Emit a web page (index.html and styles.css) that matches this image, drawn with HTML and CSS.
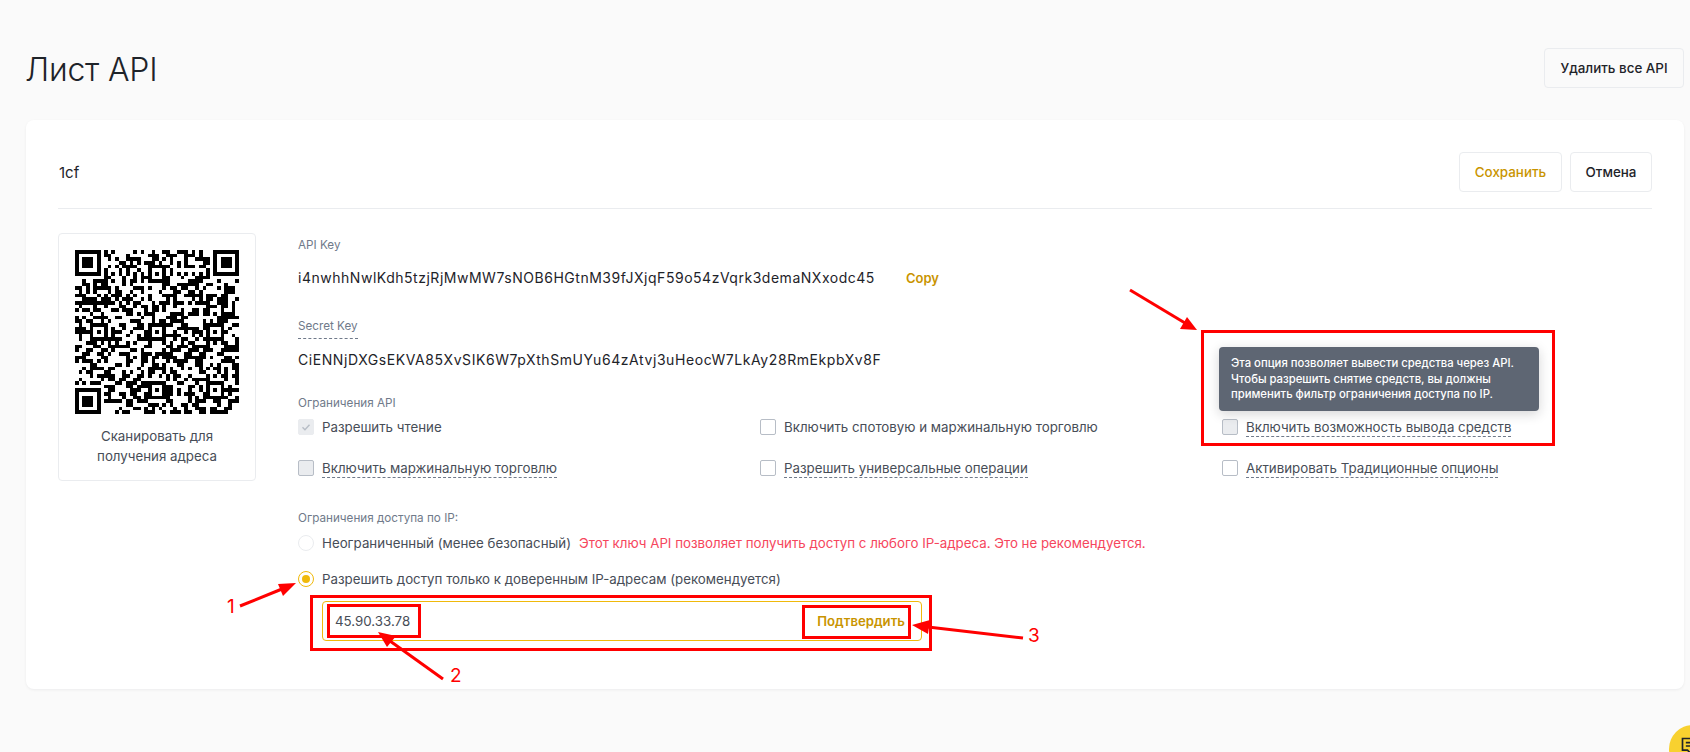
FILE: index.html
```html
<!DOCTYPE html>
<html lang="ru">
<head>
<meta charset="utf-8">
<title>Лист API</title>
<link rel="stylesheet" href="styles.css">
</head>
<body>
<div class="page">
  <header class="top">
    <h1 class="title">Лист API</h1>
    <button class="btn btn-top">Удалить все API</button>
  </header>
  <section class="card">
    <div class="card-head">
      <div class="name">1cf</div>
      <div class="actions">
        <button class="btn btn-save">Сохранить</button>
        <button class="btn btn-cancel">Отмена</button>
      </div>
    </div>
    <div class="card-body">
      <aside class="qr-box">
        <svg class="qr" viewBox="0 0 45 45" shape-rendering="crispEdges"><path id="qr-path" fill="#000" d=""/></svg>
        <p class="qr-text">Сканировать для получения адреса</p>
      </aside>
      <div class="main">
        <div class="label label-first">API Key</div>
        <div class="key-row">
          <span class="key key-api">i4nwhhNwlKdh5tzjRjMwMW7sNOB6HGtnM39fJXjqF59o54zVqrk3demaNXxodc45</span>
          <span class="copy">Copy</span>
        </div>
        <div class="label label-secret"><span class="dashed-label">Secret Key</span></div>
        <div class="key-row key-row-secret">
          <span class="key key-secret">CiENNjDXGsEKVA85XvSIK6W7pXthSmUYu64zAtvj3uHeocW7LkAy28RmEkpbXv8F</span>
        </div>
        <div class="label label-perm">Ограничения API</div>
        <div class="perm-grid">
          <div class="perm"><span class="check check-on"><svg viewBox="0 0 16 16" class="tick"><path d="M4 8.2l2.8 2.8L12 5.4" fill="none" stroke="#b7bdc6" stroke-width="1.6"/></svg></span><span class="perm-text">Разрешить чтение</span></div>
          <div class="perm"><span class="check"></span><span class="perm-text">Включить спотовую и маржинальную торговлю</span></div>
          <div class="perm perm-tip">
            <div class="tooltip">Эта опция позволяет вывести средства через API.<br>Чтобы разрешить снятие средств, вы должны<br>применить фильтр ограничения доступа по IP.</div>
            <span class="check check-off"></span><span class="perm-text dashed">Включить возможность вывода средств</span>
          </div>
          <div class="perm"><span class="check check-off"></span><span class="perm-text dashed">Включить маржинальную торговлю</span></div>
          <div class="perm"><span class="check"></span><span class="perm-text dashed">Разрешить универсальные операции</span></div>
          <div class="perm"><span class="check"></span><span class="perm-text dashed">Активировать Традиционные опционы</span></div>
        </div>
        <div class="label label-ip">Ограничения доступа по IP:</div>
        <div class="radio-row radio-row-first"><span class="radio"></span><span class="radio-text">Неограниченный (менее безопасный)</span><span class="warn">Этот ключ API позволяет получить доступ с любого IP-адреса. Это не рекомендуется.</span></div>
        <div class="radio-row radio-row-second"><span class="radio radio-on"></span><span class="radio-text">Разрешить доступ только к доверенным IP-адресам (рекомендуется)</span></div>
        <div class="ip-input"><span class="ip-value">45.90.33.78</span><span class="ip-confirm">Подтвердить</span></div>
      </div>
    </div>
  </section>
</div>

<svg class="marks" viewBox="0 0 1690 752" width="1690" height="752">
  <g fill="none" stroke="#f00" stroke-width="3">
    <rect x="1202.5" y="331.5" width="351" height="113"/>
    <rect x="311.5" y="596.5" width="619" height="53"/>
    <rect x="328.5" y="605.5" width="91" height="31"/>
    <rect x="803.5" y="606.5" width="106" height="31"/>
  </g>
  <g stroke="#f00" stroke-width="3">
    <line x1="1130" y1="290" x2="1185" y2="323"/>
    <line x1="240" y1="606" x2="282" y2="589"/>
    <line x1="443" y1="679" x2="390" y2="641"/>
    <line x1="1023" y1="638" x2="928" y2="627"/>
  </g>
  <g fill="#f00">
    <polygon points="1197,330 1180,329 1187,317"/>
    <polygon points="296,583 283,596 278,584"/>
    <polygon points="378,632 396,636 387,647"/>
    <polygon points="912,625 930,620 928,634"/>
  </g>
</svg>
<span class="num num-1">1</span>
<span class="num num-2">2</span>
<span class="num num-3">3</span>

<div class="chat"><svg class="chat-icon" viewBox="0 0 24 24"><path d="M3 3h18v14h-6l-3 3-3-3H3z M7 8h10M7 12h7" fill="none" stroke="#1e2329" stroke-width="2"/></svg></div>
<script src="qr.js"></script>
</body>
</html>
```
FILE: styles.css
```css
* { box-sizing: border-box; }
html, body { margin: 0; height: 752px; overflow: hidden; }
body {
  position: relative;
  background: #fafafa;
  color: #1e2329;
  font-family: "Inter", "Noto Sans", sans-serif;
  font-size: 13.3px;
}
.page { padding: 48px 6px 0 26px; }
.top { display: flex; justify-content: space-between; align-items: center; height: 40px; margin-bottom: 32px; }
.title { margin: 0 0 0 -1px; padding-top: 3px; font-size: 32px; line-height: 40px; font-weight: 300; letter-spacing: -0.2px; }
.btn {
  height: 40px;
  padding: 0;
  border: 1px solid #eaecef;
  border-radius: 4px;
  background: transparent;
  font: 500 13.4px/20px "Inter", "Noto Sans", sans-serif;
  color: #1e2329;
}
.btn-top { width: 140px; }
.btn-save { width: 103px; color: #c99400; }
.btn-cancel { width: 82px; }
.card {
  height: 569px;
  padding: 32px 32px 0;
  background: #fff;
  border-radius: 8px;
  box-shadow: 0 1px 3px rgba(20, 21, 26, 0.06);
}
.card-head { display: flex; justify-content: space-between; align-items: center; height: 57px; padding-bottom: 16px; border-bottom: 1px solid #eaecef; }
.name { margin-left: 1px; font-size: 15px; }
.actions { display: flex; gap: 8px; }
.card-body { display: flex; margin-top: 24px; }
.qr-box { width: 198px; height: 248px; margin-right: 42px; padding: 16px; border: 1px solid #eaecef; border-radius: 4px; flex: none; }
.qr { display: block; width: 164px; height: 164px; }
.qr-text { margin: 12px 0 0; text-align: center; line-height: 20px; color: #474d57; }
.main { flex: 1; min-width: 0; }
.label { font-size: 11.7px; line-height: 16px; color: #707a8a; }
.label-first { margin-top: 4px; }
.key-row { display: flex; align-items: center; height: 20px; margin-top: 15px; }
.key { font-size: 14px; line-height: 20px; }
.key-api { letter-spacing: 0.52px; }
.key-secret { letter-spacing: 0.57px; }
.copy { margin-left: 31px; font-size: 13px; font-weight: 600; color: #c99400; }
.label-secret { height: 16px; margin-top: 30px; }
.dashed-label { display: inline-block; height: 21px; border-bottom: 1px dashed #707a8a; }
.key-row-secret { margin-top: 16px; }
.label-perm { margin-top: 25px; }
.perm-grid { display: grid; grid-template-columns: repeat(3, 462px); row-gap: 21px; margin-top: 6px; }
.perm { display: flex; align-items: center; gap: 8px; height: 20px; color: #474d57; }
.perm-tip { position: relative; }
.check { width: 16px; height: 16px; flex: none; border: 1px solid #b7bdc6; border-radius: 2px; background: #fff; }
.check-on { border-color: #eaecef; background: #eaecef; }
.check-off { background: #eaecef; }
.tick { display: block; width: 14px; height: 14px; }
.perm-text { white-space: nowrap; }
.dashed { border-bottom: 1px dashed #707a8a; line-height: 18px; }
.tooltip {
  position: absolute;
  left: -3px;
  bottom: calc(100% + 6px);
  width: 320px;
  height: 64px;
  padding: 9px 12px;
  background: #5e6673;
  border-radius: 4px;
  color: #fff;
  font-size: 11.3px;
  font-weight: 500;
  line-height: 15.5px;
  white-space: nowrap;
  box-shadow: 0 3px 12px rgba(20, 21, 26, 0.18);
}
.label-ip { margin-top: 32px; }
.radio-row { display: flex; align-items: center; height: 20px; color: #474d57; white-space: nowrap; }
.radio-row-first { margin-top: 7px; }
.radio-row-second { margin-top: 16px; }
.radio { width: 16px; height: 16px; margin-right: 8px; flex: none; border: 1px solid #eaecef; border-radius: 50%; background: #fff; }
.radio-on { position: relative; border-color: #f0b90b; }
.radio-on::after { content: ""; position: absolute; left: 3px; top: 3px; width: 8px; height: 8px; border-radius: 50%; background: #f0b90b; }
.warn { margin-left: 8px; color: #f6465d; }
.ip-input {
  display: flex;
  justify-content: space-between;
  align-items: center;
  width: 600px;
  height: 40px;
  margin: 12px 0 0 24px;
  padding: 0 16px 0 12px;
  border: 1px solid #f0b90b;
  border-radius: 4px;
}
.ip-value { color: #474d57; }
.ip-confirm { font-weight: 600; font-size: 13.2px; color: #c99400; }
.marks { position: absolute; left: 0; top: 0; pointer-events: none; }
.num { position: absolute; font-size: 19px; line-height: 22px; color: #f00; }
.num-1 { left: 227px; top: 596px; }
.num-2 { left: 450px; top: 665px; }
.num-3 { left: 1028px; top: 625px; }
.chat { position: absolute; left: 1669px; top: 725px; width: 48px; height: 48px; padding: 11px; border-radius: 50%; background: #f8d12f; }
.chat-icon { display: block; width: 20px; height: 20px; }
```
FILE: qr.js
```js
(function () {
  var n = 45, grid = [], seed = 20231, x, y, i, j;
  function rand() { seed = (seed * 1103515245 + 12345) & 0x7fffffff; return (seed >> 16) & 1; }
  for (y = 0; y < n; y++) { grid[y] = []; for (x = 0; x < n; x++) grid[y][x] = rand(); }
  function square(cx, cy, r) {
    for (j = -r - 1; j <= r + 1; j++) for (i = -r - 1; i <= r + 1; i++) {
      var px = cx + i, py = cy + j;
      if (px < 0 || py < 0 || px >= n || py >= n) continue;
      var d = Math.max(Math.abs(i), Math.abs(j));
      grid[py][px] = r === 3 ? (d === 4 || d === 2 ? 0 : 1) : (d === 1 ? 0 : 1);
    }
  }
  for (i = 8; i < n - 8; i++) { grid[6][i] = (i + 1) % 2; grid[i][6] = (i + 1) % 2; }
  square(3, 3, 3); square(n - 4, 3, 3); square(3, n - 4, 3);
  [[6, 22], [22, 6], [22, 22], [22, 38], [38, 22], [38, 38]].forEach(function (a) {
    for (j = -2; j <= 2; j++) for (i = -2; i <= 2; i++) {
      var d = Math.max(Math.abs(i), Math.abs(j));
      grid[a[1] + j][a[0] + i] = d === 1 ? 0 : 1;
    }
  });
  var d = "";
  for (y = 0; y < n; y++) for (x = 0; x < n; x++) if (grid[y][x]) d += "M" + x + " " + y + "h1v1h-1z";
  document.getElementById("qr-path").setAttribute("d", d);
})();
```
